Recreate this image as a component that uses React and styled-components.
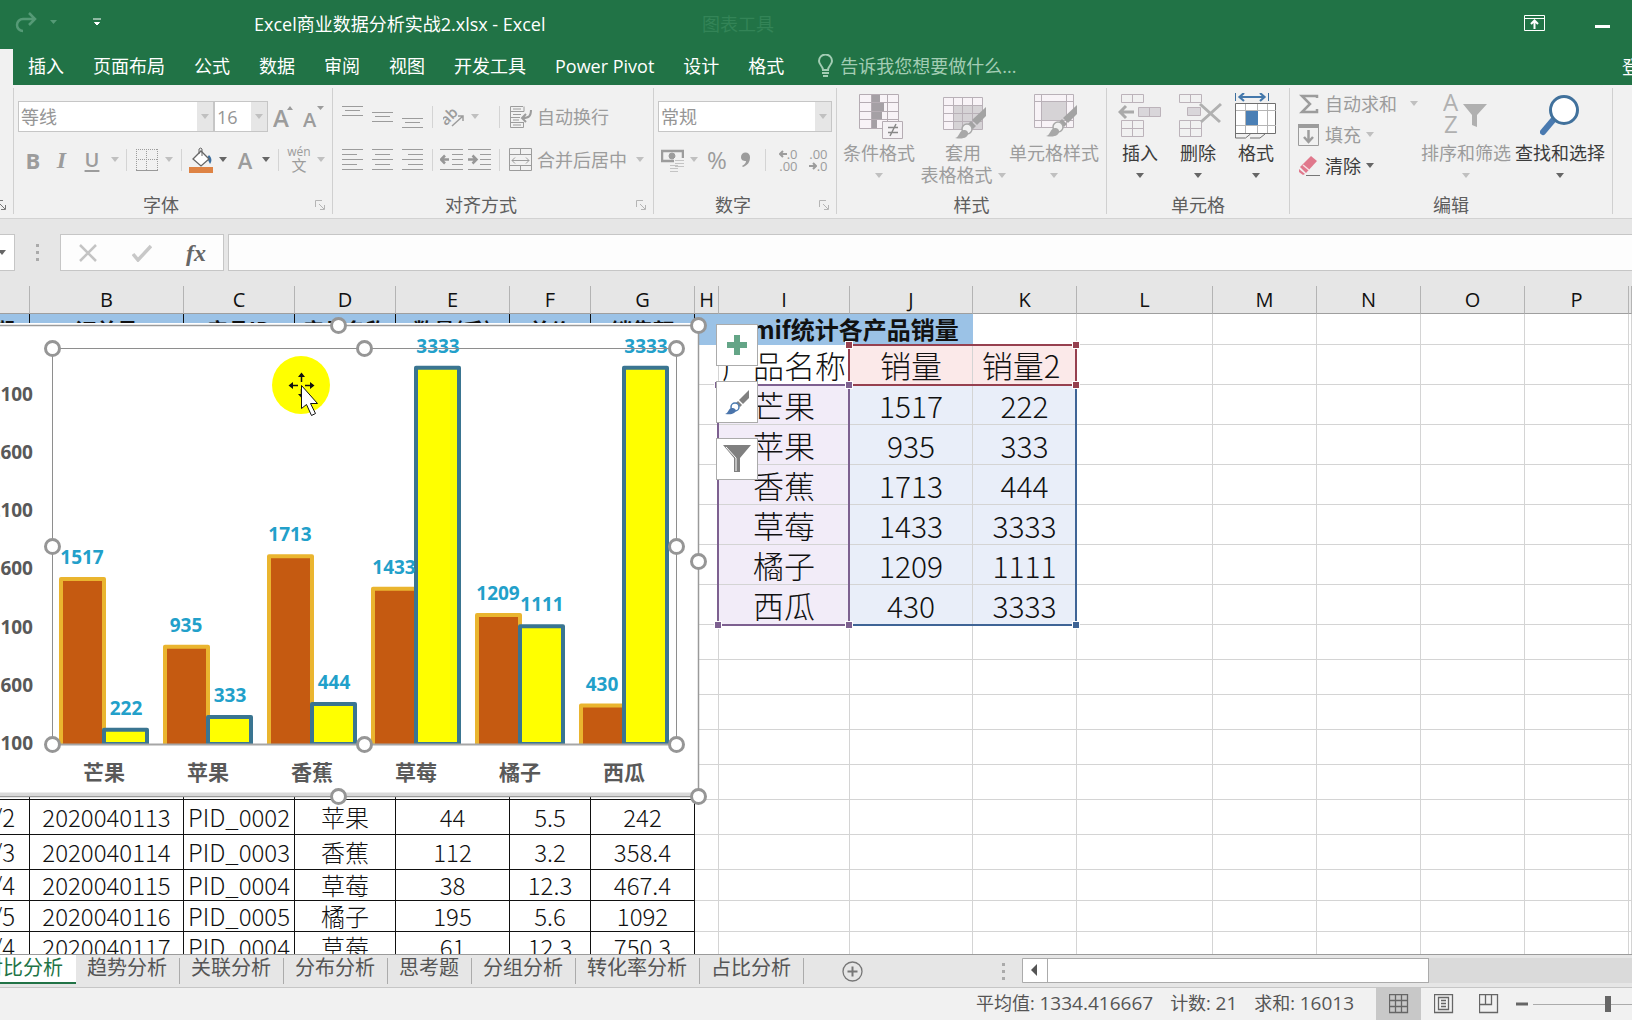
import React from 'react';
import styled, { createGlobalStyle, css } from 'styled-components';

const GlobalStyle = createGlobalStyle`
  * {
    box-sizing: border-box;
  }
  body {
    margin: 0;
    overflow: hidden;
  }
  body, button, input, select {
    font-family: 'Open Sans', 'Noto Sans CJK SC', sans-serif;
    font-size: 18px;
  }
`;

const green = '#217346';
const grey = '#9c9c9c';
const line = '#c6c6c6';

const Window = styled.div`
  display: flex;
  flex-direction: column;
  height: 100vh;
  background: #e6e6e6;
  color: #444;
`;

/* ---------- title bar and tabs ---------- */

const TitleBar = styled.header`
  display: flex;
  align-items: center;
  height: 49px;
  padding: 0 22px 4px 14px;
  background: ${green};
  color: #fff;
`;

const QuickAccess = styled.div`
  display: flex;
  align-items: center;
  gap: 12px;
  width: 240px;
`;

const PlainButton = styled.button`
  display: inline-flex;
  align-items: center;
  justify-content: center;
  flex: none;
  width: ${(p) => (p.$w ? `${p.$w}px` : 'auto')};
  height: ${(p) => (p.$h ? `${p.$h}px` : 'auto')};
  padding: 0;
  border: 0;
  background: none;
  color: ${(p) => p.$color || grey};
  line-height: 24px;
  white-space: nowrap;
`;

const FileName = styled.h1`
  margin: 0;
  width: 421px;
  font-size: 18px;
  font-weight: 400;
  white-space: nowrap;
`;

const ToolsCaption = styled.div`
  width: 128px;
  padding-left: 27px;
  color: #338457;
  white-space: nowrap;
`;

const WindowButtons = styled.div`
  display: flex;
  align-items: center;
  gap: 50px;
  margin-left: auto;
`;

const TabBar = styled.nav`
  display: flex;
  align-items: center;
  gap: 29px;
  height: 36px;
  padding-bottom: 3px;
  background: ${green};
  overflow: hidden;
`;

const CurrentTab = styled.span`
  width: 13px;
  height: 36px;
  margin: 0 -14px -3px 0;
  background: #f1f1f1;
`;

const RibbonTab = styled.a`
  color: #fff;
  line-height: 24px;
  text-decoration: none;
  white-space: nowrap;
`;

const TellMe = styled.label`
  display: flex;
  align-items: center;
  gap: 7px;
  margin-left: 5px;
  input {
    width: 190px;
    height: 26px;
    padding: 0;
    border: 0;
    background: none;
    &::placeholder {
      color: #a3cdb4;
      opacity: 1;
    }
  }
`;

const SignIn = styled.a`
  width: 10px;
  margin-left: auto;
  color: #fff;
  text-decoration: none;
  white-space: nowrap;
  overflow: hidden;
`;

/* ---------- ribbon ---------- */

const Ribbon = styled.div`
  display: flex;
  height: 134px;
  padding: 3px 0 4px;
  background: #f1f1f1;
  border-bottom: 1px solid #d2d2d2;
  overflow: hidden;
`;

const Group = styled.section`
  display: flex;
  flex-direction: column;
  flex: none;
  width: ${(p) => p.$w}px;
  border-right: 1px solid #d0d0d0;
`;

const GroupBody = styled.div`
  display: flex;
  flex: 1;
  padding: 0 ${(p) => p.$pad || 0}px;
`;

const GroupFooter = styled.div`
  display: flex;
  align-items: center;
  justify-content: flex-end;
  height: 18px;
  color: #5e5e5e;
  h2 {
    flex: 1;
    margin: 0;
    font-size: 18px;
    font-weight: 400;
    line-height: 18px;
    text-align: center;
  }
`;

const Rows = styled.div`
  display: flex;
  flex-direction: column;
  gap: 12px;
  padding-top: 13px;
`;

const ToolRow = styled.div`
  display: flex;
  align-items: center;
  height: 31px;
`;

const Divider = styled.span`
  flex: none;
  width: 1px;
  height: 22px;
  margin: 0 5px 0 ${(p) => (p.$far ? 19 : 5)}px;
  background: #d4d4d4;
`;

const Caret = styled.i`
  flex: none;
  display: inline-block;
  border: 4px solid transparent;
  border-top: 5px solid ${(p) => (p.$dark ? '#666' : '#c0c0c0')};
  border-bottom: 0;
`;

const Combo = styled.span`
  display: flex;
  flex: none;
  width: ${(p) => p.$w}px;
  height: 31px;
  border: 1px solid ${line};
  background: #fff;
  select {
    flex: 1;
    min-width: 0;
    padding: 0 2px;
    border: 0;
    background: #fff;
    color: #959595;
    appearance: none;
  }
`;

const ComboArrow = styled.span`
  display: flex;
  align-items: center;
  justify-content: center;
  width: 16px;
  background: #e6e6e6;
`;

const Glyph = styled.span`
  font-size: ${(p) => p.$size || 22}px;
  line-height: 26px;
  font-weight: ${(p) => p.$weight || 400};
  font-style: ${(p) => (p.$italic ? 'italic' : 'normal')};
  font-family: ${(p) => (p.$serif ? "'Liberation Serif', serif" : 'inherit')};
  text-decoration: ${(p) => (p.$under ? 'underline' : 'none')};
  text-decoration-thickness: 2px;
  text-underline-offset: 3px;
`;

const Pinyin = styled.span`
  display: flex;
  flex-direction: column;
  align-items: center;
  font-size: 12px;
  line-height: 12px;
  span {
    font-size: 15px;
    line-height: 15px;
  }
`;

const Decimals = styled.span`
  display: flex;
  flex-direction: column;
  align-items: flex-end;
  width: 23px;
  font-size: 13px;
  line-height: 12px;
  span {
    display: flex;
    align-items: center;
  }
`;

const BigButton = styled.button`
  display: flex;
  flex-direction: column;
  align-items: center;
  flex: none;
  width: ${(p) => p.$w}px;
  height: 100px;
  padding: 5px 0 0;
  border: 0;
  background: none;
  color: ${(p) => (p.$on ? '#3c3c3c' : grey)};
  line-height: 22px;
  white-space: nowrap;
`;

const BigIcon = styled.span`
  display: flex;
  justify-content: center;
  height: 49px;
`;

const BigTail = styled.span`
  display: flex;
  align-items: center;
  gap: 5px;
  height: 22px;
`;

const EditList = styled.div`
  display: flex;
  flex-direction: column;
  width: 129px;
  padding-left: 8px;
`;

const EditButton = styled(PlainButton)`
  justify-content: flex-start;
  gap: 5px;
  height: 31px;
  i {
    margin-left: ${(p) => (p.$far ? 8 : 0)}px;
  }
`;

/* ---------- formula bar ---------- */

const FormulaBar = styled.div`
  display: flex;
  height: 67px;
  padding: 15px 0;
`;

const NameBox = styled.div`
  display: flex;
  align-items: center;
  justify-content: flex-end;
  width: 15px;
  border: 1px solid ${line};
  border-left: 0;
  background: #fff;
  padding-right: 8px;
`;

const Grip = styled.span`
  display: flex;
  flex-direction: column;
  align-items: center;
  justify-content: center;
  gap: 4px;
  width: ${(p) => p.$w}px;
  &::before, &::after, i {
    content: '';
    width: 3px;
    height: 3px;
    background: #aaa;
  }
`;

const FormulaButtons = styled.div`
  display: flex;
  align-items: center;
  width: 164px;
  margin-right: 4px;
  border: 1px solid ${line};
  background: #fdfdfd;
`;

const FormulaInput = styled.input`
  flex: 1;
  min-width: 0;
  border: 1px solid ${line};
  border-right: 0;
  border-radius: 0;
  background: #fdfdfd;
`;

/* ---------- sheet ---------- */

const Sheet = styled.main`
  position: relative;
  flex: 1;
  min-height: 0;
  background: #fff;
  overflow: hidden;
`;

const Grid = styled.table`
  width: 100%;
  table-layout: fixed;
  border-spacing: 0;
  color: #111;
  font-family: 'Noto Sans CJK SC', sans-serif;
`;

const ColHead = styled.th`
  height: 28px;
  padding: 0;
  background: #e6e6e6;
  border-right: 1px solid #b4b4b4;
  border-bottom: 1px solid #9f9f9f;
  font: 400 20px/22px 'Open Sans', sans-serif;
`;

const fills = {
  blue: '#9bc2e6',
  range: '#e9eef9',
  names: '#f2ecf8',
  head: '#fbe9e9',
};

const Cell = styled.td`
  height: ${(p) => p.$h}px;
  padding: 0;
  border-right: 1px solid #d4d4d4;
  border-bottom: 1px solid #d4d4d4;
  font-size: ${(p) => p.$size || 24}px;
  font-weight: 300;
  line-height: 26px;
  text-align: center;
  white-space: nowrap;
  overflow: hidden;
  ${(p) => p.$fill && css`background: ${fills[p.$fill]};`}
  ${(p) => p.$boxed && css`border-color: #111;`}
  ${(p) => p.$bold && css`font-weight: 700;`}
  ${(p) => p.$merged && css`
    padding-left: 16px;
    border-right-color: ${fills.blue};
    border-bottom-color: ${fills.blue};
  `}
  ${(p) => p.$end && css`direction: rtl; padding-right: 15px;`}
`;

const Range = styled.div`
  position: absolute;
  left: ${(p) => p.$x}px;
  top: ${(p) => p.$y}px;
  width: ${(p) => p.$w}px;
  height: ${(p) => p.$h}px;
  border: 2px solid ${(p) => p.$color};
  i {
    position: absolute;
    width: 8px;
    height: 8px;
    border: 1px solid #fff;
    background: ${(p) => p.$color};
  }
  i:nth-child(1) { left: -5px; top: -5px; }
  i:nth-child(2) { right: -5px; top: -5px; }
  i:nth-child(3) { left: -5px; bottom: -5px; }
  i:nth-child(4) { right: -5px; bottom: -5px; }
`;

const ChartLayer = styled.svg`
  position: absolute;
  left: 0;
  top: 28px;
  font-family: 'Open Sans', 'Noto Sans CJK SC', sans-serif;
  font-weight: 700;
`;

const ChartButtons = styled.div`
  position: absolute;
  left: 716px;
  top: 38px;
  display: flex;
  flex-direction: column;
  gap: 15px;
  button {
    display: flex;
    align-items: center;
    justify-content: center;
    width: 42px;
    height: 42px;
    padding: 0;
    border: 1px solid #ababab;
    background: #fff;
  }
`;

const Pointer = styled.svg`
  position: absolute;
  left: 272px;
  top: 69px;
`;

/* ---------- sheet tabs and status bar ---------- */

const SheetBar = styled.div`
  display: flex;
  height: 34px;
  border-top: 1px solid #9b9b9b;
  border-bottom: 1px solid ${line};
  background: #e6e6e6;
`;

const SheetTab = styled.a`
  flex: none;
  height: 26px;
  margin-top: 3px;
  padding: 0 12px 0 11px;
  border-right: 1px solid #ababab;
  color: #555;
  font-size: 20px;
  line-height: 20px;
  text-decoration: none;
  white-space: nowrap;
  ${(p) => p.$current && css`
    display: flex;
    justify-content: flex-end;
    width: 76px;
    height: 29px;
    margin-top: 0;
    padding: 3px 13px 0 0;
    border-right: 0;
    border-bottom: 2px solid ${green};
    background: #fff;
    color: ${green};
    overflow: hidden;
  `}
`;

const BarSpace = styled.span`
  width: 83px;
`;

const ScrollBar = styled.div`
  display: flex;
  flex: 1;
  height: 25px;
  margin-top: 3px;
  background: #dadada;
`;

const ScrollThumb = styled.div`
  width: 382px;
  border: 1px solid #ababab;
  background: #fff;
`;

const StatusBar = styled.footer`
  display: flex;
  align-items: center;
  justify-content: flex-end;
  height: 32px;
  background: #f1f1f1;
  color: #555;
  white-space: nowrap;
`;

const Stats = styled.div`
  display: flex;
  gap: 17px;
  margin-right: 22px;
  padding-bottom: 3px;
  line-height: 24px;
  b {
    font-size: 19px;
    font-weight: 400;
  }
`;

const ViewButton = styled.button`
  display: flex;
  align-items: center;
  justify-content: center;
  width: 45px;
  height: 32px;
  padding: 0;
  border: 0;
  background: ${(p) => (p.$on ? '#c8c8c8' : 'transparent')};
`;

const Zoom = styled.input`
  width: 99px;
  height: 20px;
  margin: 0;
  appearance: none;
  background: linear-gradient(#ababab, #ababab) center / 100% 1px no-repeat;
  &::-webkit-slider-thumb {
    appearance: none;
    width: 6px;
    height: 16px;
    background: #666;
  }
`;

/* ---------- icons ---------- */

const Svg = ({ w, h, children, ...rest }) => (
  <svg width={w} height={h} viewBox={`0 0 ${w} ${h}`} fill="none" stroke={grey} aria-hidden="true" {...rest}>
    {children}
  </svg>
);

const Lines = ({ rows, w = 21, h = 24 }) => (
  <Svg w={w} h={h}>
    {rows.map(([x1, x2, y]) => (
      <path key={y} d={`M${x1} ${y + 0.5}H${x2}`} />
    ))}
  </Svg>
);

const alignTop = [[0, 21, 1], [3, 18, 5], [0, 21, 10]];
const alignMiddle = [[0, 21, 7], [3, 18, 11], [0, 21, 16]];
const alignBottom = [[0, 21, 13], [3, 18, 17], [0, 21, 22]];
const leftLines = [[0, 21, 1], [0, 15, 6], [0, 21, 11], [0, 15, 16], [0, 21, 21]];
const centerLines = [[0, 21, 1], [3, 18, 6], [0, 21, 11], [3, 18, 16], [0, 21, 21]];
const rightLines = [[0, 21, 1], [6, 21, 6], [0, 21, 11], [6, 21, 16], [0, 21, 21]];

const Launcher = ({ dark }) => (
  <PlainButton $w={24} $h={18} aria-label="对话框启动器">
    <Svg w={10} h={10} stroke={dark ? '#777' : '#b5b5b5'}>
      <path d="M.5 7V.5H7M4 4l5 5M9.5 5v4.500H5" />
    </Svg>
  </PlainButton>
);

const GrowFont = ({ down }) => (
  <Svg w={22} h={26} fill={grey} stroke="none">
    <text x="0" y="23" fontSize={down ? 20 : 24} fontWeight="600">A</text>
    <path d={down ? 'M14 2h7l-3.500 4z' : 'M14 6h6l-3-4z'} />
  </Svg>
);

const Indent = ({ flip }) => (
  <Svg w={23} h={23}>
    <path d="M0 1.500h23M12 6.500h11M12 11.500h11M12 16.500h11M0 21.500h23" />
    <path d={flip ? 'M0 11.500h8M4.500 7.500l4 4-4 4' : 'M9 11.500H1M5 7.500l-4 4 4 4'} strokeWidth="2.500" stroke="#979797" />
  </Svg>
);

const Brush = ({ x = 0, y = 0, tip = '#a8a8a8' }) => (
  <g transform={`translate(${x} ${y})`} stroke="none">
    <path d="M31 0v9L22 18l-5-5z" fill="#a3a3a3" />
    <path d="M16 14l5 5-3 3-5-5z" fill="#a3a3a3" />
    <circle cx="12" cy="22" r="5" fill="#f1f1f1" stroke={tip} strokeWidth="1.500" />
    <path d="M0 31c5-1 4-9 10-8 4 1 4 5 1 7-2 1.500-6 2-11 1z" fill={tip} />
  </g>
);

const ConditionalIcon = () => (
  <Svg w={40} h={46} stroke="#b5acb3" overflow="visible">
    <path d="M.5 1.500h39v34H.5z" fill="#f8f3f7" />
    <path d="M12 2h9v8h-9zM12 10h13v9H12zM12 19h11v8H12zM12 27h6v8h-6z" fill="#a5a0a5" stroke="none" />
    <path d="M.5 9.500h39M.5 18.500h39M.5 26.500h39M12.500 1v34M28.500 1v34" />
    <path d="M23.500 28.500h20v17h-20z" fill="#f5f2f5" />
    <path d="M29 34.500h10M29 39.500h10M37 31l-6 12" stroke="#888" strokeWidth="1.500" />
  </Svg>
);

const TableStyleIcon = () => (
  <Svg w={40} h={48} stroke="#b9b1b8" overflow="visible">
    <path d="M.5 4.500h39v32H.5z" fill="#f8f3f7" />
    <path d="M10 13h29v23H10z" fill="#d6d3d6" stroke="none" />
    <path d="M.5 12.500h39M.5 20.500h39M.5 28.500h39M10.500 4v32M19.500 4v32M29.500 4v32" />
    <Brush x={12} y={14} />
  </Svg>
);

const CellStyleIcon = () => (
  <Svg w={40} h={46} stroke="#b9b1b8" overflow="visible">
    <path d="M.5 1.500h39v33H.5z" fill="#f8f3f7" />
    <path d="M8 9h24v19H8z" fill="#d6d3d6" stroke="none" />
    <path d="M.5 8.500h39M7.500 1v33M.5 27.500h39M32.500 1v33" />
    <Brush x={12} y={12} />
  </Svg>
);

const InsertIcon = () => (
  <Svg w={44} h={45} stroke="#bcb3ba">
    <path d="M3.500 1.500h22v8h-22zM14.500 1v8" />
    <path d="M20.500 14.500h22v9h-22z" fill="#d9d6da" />
    <path d="M31.500 14v9M3.500 27.500h22v16h-22zM14.500 27v16M3 35.500h22" />
    <path d="M16 19H2M8 13l-6 6 6 6" stroke="#aaa" strokeWidth="3" />
  </Svg>
);

const DeleteIcon = () => (
  <Svg w={38} h={45} stroke="#bcb3ba" overflow="visible">
    <path d="M.5 1.500h22v8H.5zM11.500 1v8" />
    <path d="M8.500 14.500h13v8h-13z" fill="#d9d6da" />
    <path d="M.5 27.500h22v16H.5zM11.500 27v16M0 35.500h22" />
    <path d="M21 11l20 18M42 11L22 29" stroke="#b0b0b0" strokeWidth="3" />
  </Svg>
);

const FormatIcon = () => (
  <Svg w={42} h={46} stroke="#6f6f6f">
    <path d="M.5 0v8M33.500 0v8" stroke="#3d6f9f" />
    <path d="M4 4h26M9 0L4.500 4 9 8M25 0l4.500 4L25 8" stroke="#4478ab" strokeWidth="2.200" />
    <path d="M.5 10.500h40v30H.5z" fill="#fff" />
    <path d="M10.500 11v29M22.500 11v29M32.500 11v29M1 17.500h40M1 32.500h40" stroke="#b5b5b5" />
    <path d="M11 18h12v14H11z" fill="#4a7fb5" stroke="none" />
    <path d="M.5 40v5h10l5-4M15 45h10l5-4" />
  </Svg>
);

const SortIcon = () => (
  <Svg w={46} h={44} stroke="none" fill="#b0b0b0">
    <text x="0" y="18" fontSize="24">A</text>
    <text x="1" y="40" fontSize="24">Z</text>
    <path d="M20 11h24L34 22v12l-5-2V22z" />
  </Svg>
);

const FindIcon = () => (
  <Svg w={40} h={44} stroke="#41719c">
    <path d="M14 26L3 39" stroke="#4a7ab0" strokeWidth="6" strokeLinecap="round" />
    <circle cx="24" cy="17" r="13.500" fill="#fff" strokeWidth="3" />
  </Svg>
);

/* ---------- chart ---------- */

const products = [
  ['芒果', 1517, 222],
  ['苹果', 935, 333],
  ['香蕉', 1713, 444],
  ['草莓', 1433, 3333],
  ['橘子', 1209, 1111],
  ['西瓜', 430, 3333],
];

const plot = { left: 52, right: 676, top: 34, bottom: 430 };
const step = (plot.right - plot.left) / products.length;
const barWidth = 43;
const yOf = (v) => plot.bottom - (v - 100) * 0.1164;

const Bar = ({ x, value, fill, stroke }) => {
  const top = yOf(value);
  return (
    <path
      d={`M${x} ${plot.bottom}V${top}H${x + barWidth}V${plot.bottom}`}
      fill={fill}
      stroke={stroke}
      strokeWidth="4"
      strokeLinejoin="round"
    />
  );
};

const handles = [
  [338, 11], [698, 11], [698, 247], [698, 482], [338, 482],
  [52, 34], [364, 34], [676, 34], [52, 232], [676, 232], [52, 430], [364, 430], [676, 430],
];

const Chart = () => (
  <ChartLayer width="708" height="494" role="img" aria-label="各产品销量">
    <rect x="-22" y="9" width="720" height="474" fill="#fff" />
    <path d="M0 480H697" stroke="#d9d9d9" strokeWidth="3" />
    <path d="M0 11.500H698.500V482.500H0" fill="none" stroke="#9a9a9a" strokeWidth="1.500" />
    {[3100, 2600, 2100, 1600, 1100, 600, 100].map((v) => (
      <text key={v} x="33" y={yOf(v) + 6} fontSize="19" fill="#595959" textAnchor="end">{v}</text>
    ))}
    {products.map(([name, a, b], i) => {
      const mid = plot.left + step * (i + 0.5);
      return (
        <g key={name}>
          <Bar x={mid - barWidth} value={a} fill="#c55a11" stroke="#eab52f" />
          <Bar x={mid} value={b} fill="#ffff00" stroke="#3a7591" />
          <path d={`M${mid} ${plot.bottom - 1}h${barWidth}`} stroke="#3a7591" strokeWidth="2" />
          <text x={mid} y="466" fontSize="21" fill="#595959" textAnchor="middle">{name}</text>
        </g>
      );
    })}
    <g fontSize="19" fill="#22a0ca" textAnchor="middle">
      {products.map(([name, a, b], i) => {
        const mid = plot.left + step * (i + 0.5);
        return (
          <React.Fragment key={name}>
            <text x={mid - 22} y={yOf(a) - 15}>{a}</text>
            <text x={mid + 22} y={yOf(b) - 15}>{b}</text>
          </React.Fragment>
        );
      })}
    </g>
    <path d="M52.500 34.500H676.500V430.500H52.500z" fill="none" stroke="#8e8e8e" />
    <path d="M52 430.500H676" stroke="#a6a6a6" strokeWidth="2" />
    {handles.map(([x, y]) => (
      <circle key={`${x}-${y}`} cx={x + 0.5} cy={y + 0.5} r="7" fill="#fff" stroke="#969696" strokeWidth="3" />
    ))}
  </ChartLayer>
);

/* ---------- sheet data ---------- */

// the last column takes what is left of the window
const columns = [
  ['A', 30], ['B', 154], ['C', 111], ['D', 101], ['E', 114], ['F', 81], ['G', 104], ['H', 24], ['I', 131],
  ['J', 123], ['K', 104], ['L', 136], ['M', 104], ['N', 104], ['O', 104], ['P', 104], ['Q', null],
];

const titles = ['日期', '订单号', '产品ID', '产品名称', '数量(千)', '单价', '销售额'];

const orders = [
  [35, '2020/4/2', '2020040113', 'PID_0002', '苹果', '44', '5.5', '242'],
  [35, '2020/4/3', '2020040114', 'PID_0003', '香蕉', '112', '3.2', '358.4'],
  [31, '2020/4/4', '2020040115', 'PID_0004', '草莓', '38', '12.3', '467.4'],
  [31, '2020/4/5', '2020040116', 'PID_0005', '橘子', '195', '5.6', '1092'],
  [31, '2020/4/4', '2020040117', 'PID_0004', '草莓', '61', '12.3', '750.3'],
];

const Blank = ({ n, h, boxed }) =>
  Array.from({ length: n }, (_, i) => <Cell key={i} $h={h} $boxed={boxed} />);

const SheetGrid = () => (
  <Grid>
    <colgroup>
      {columns.map(([name, w]) => <col key={name} width={w || undefined} />)}
    </colgroup>
    <thead>
      <tr>
        {columns.map(([name, w]) => (
          <ColHead key={name} scope="col">{name === 'A' || !w ? '' : name}</ColHead>
        ))}
      </tr>
    </thead>
    <tbody>
      <tr>
        {titles.map((t, i) => (
          <Cell key={t} $h={31} $size={21} $fill="blue" $bold $boxed $end={i === 0}>{t}</Cell>
        ))}
        <Cell colSpan={3} $h={31} $fill="blue" $bold $merged>sumif统计各产品销量</Cell>
        <Blank n={7} h={31} />
      </tr>
      <tr>
        <Blank n={8} h={40} />
        <Cell $h={40} $size={31}>产品名称</Cell>
        <Cell $h={40} $size={31} $fill="head">销量</Cell>
        <Cell $h={40} $size={31} $fill="head">销量2&nbsp;</Cell>
        <Blank n={6} h={40} />
      </tr>
      {products.map(([name, a, b]) => (
        <tr key={name}>
          <Blank n={8} h={40} />
          <Cell $h={40} $size={31} $fill="names">{name}</Cell>
          <Cell $h={40} $size={30} $fill="range">{a}</Cell>
          <Cell $h={40} $size={30} $fill="range">{b}</Cell>
          <Blank n={6} h={40} />
        </tr>
      ))}
      {[9, 10, 11, 12, 13].map((n) => (
        <tr key={n}>
          <Blank n={7} h={35} boxed />
          <Blank n={10} h={35} />
        </tr>
      ))}
      {orders.map(([h, ...cells]) => (
        <tr key={cells[1]}>
          {cells.map((c, i) => <Cell key={i} $h={h} $boxed $end={i === 0}>{c}</Cell>)}
          <Blank n={10} h={h} />
        </tr>
      ))}
    </tbody>
  </Grid>
);

const RangeMark = (props) => (
  <Range {...props}><i /><i /><i /><i /></Range>
);

/* ---------- ribbon groups ---------- */

const Tool = ({ w, label, children, ...rest }) => (
  <PlainButton $w={w} $h={30} aria-label={label} {...rest}>{children}</PlainButton>
);

const Drop = ({ w, dark }) => (
  <PlainButton $w={w} $h={30} aria-label="更多选项"><Caret $dark={dark} /></PlainButton>
);

const Footer = ({ title, launcher }) => (
  <GroupFooter>
    <h2>{title}</h2>
    {launcher && <Launcher />}
  </GroupFooter>
);

const ComboBox = ({ w, label, value }) => (
  <Combo $w={w}>
    <select aria-label={label} defaultValue={value}>
      <option>{value}</option>
    </select>
    <ComboArrow><Caret /></ComboArrow>
  </Combo>
);

const FontGroup = () => (
  <Group $w={319}>
    <GroupBody $pad={4}>
      <Rows>
        <ToolRow>
          <ComboBox w={196} label="字体" value="等线" />
          <ComboBox w={54} label="字号" value="16" />
          <Tool w={32} label="增大字号"><GrowFont /></Tool>
          <Tool w={28} label="减小字号"><GrowFont down /></Tool>
        </ToolRow>
        <ToolRow>
          <Tool w={30} label="加粗"><Glyph $weight={700}>B</Glyph></Tool>
          <Tool w={27} label="倾斜"><Glyph $serif $italic $weight={700} $size={24}>I</Glyph></Tool>
          <Tool w={34} label="下划线"><Glyph $under $weight={600} $size={20}>U</Glyph></Tool>
          <Drop w={12} />
          <Divider />
          <Tool w={30} label="边框">
            <Svg w={22} h={22}>
              <path d="M.5 0v21M10.500 0v21M21.500 0v21M0 .5h21M0 10.500h21" strokeDasharray="1 1" />
              <path d="M0 21.500h22" stroke="#999" />
            </Svg>
          </Tool>
          <Drop w={14} />
          <Divider />
          <Tool w={28} label="填充颜色">
            <Svg w={24} h={26} stroke="#666">
              <path d="M20 8c3 3 3 6 1 9l-3-6z" fill="#3d6f9f" stroke="none" />
              <path d="M12 4l8 8-8 7-8-7z" fill="#fff" strokeWidth="1.300" />
              <path d="M10 7V2q2-2 3 0v7" />
              <path d="M0 20h24v6H0z" fill="#de8344" stroke="none" />
            </Svg>
          </Tool>
          <Drop w={16} dark />
          <Tool w={28} label="字体颜色"><Glyph $weight={600}>A</Glyph></Tool>
          <Drop w={14} dark />
          <Divider />
          <Tool w={30} label="拼音"><Pinyin>wén<span>文</span></Pinyin></Tool>
          <Drop w={14} />
        </ToolRow>
      </Rows>
    </GroupBody>
    <Footer title="字体" launcher />
  </Group>
);

const AlignGroup = () => (
  <Group $w={321}>
    <GroupBody $pad={4}>
      <Rows>
        <ToolRow>
          <Tool w={30} label="顶端对齐"><Lines rows={alignTop} /></Tool>
          <Tool w={30} label="垂直居中"><Lines rows={alignMiddle} /></Tool>
          <Tool w={30} label="底端对齐"><Lines rows={alignBottom} /></Tool>
          <Divider />
          <Tool w={32} label="方向">
            <Svg w={22} h={24}>
              <text x="-2" y="15" fontSize="15" fontWeight="600" fill={grey} stroke="none" transform="rotate(-45 8 12)">ab</text>
              <path d="M9 21L20 11M15 11h5v5" strokeWidth="1.500" />
            </Svg>
          </Tool>
          <Drop w={10} />
          <Divider $far />
          <Tool w={32} label="换行图标">
            <Svg w={24} h={24}>
              <path d="M14 1.500H1.500v21h13v-5M1 6.500h14M1 12.500h10M1 17.500h14M15 1.500v5M4 4h8M4 9.500h8M4 15h6M4 20h8" />
              <path d="M22 5c0 6-2 8-8 8M17 9l-4 4 4 4" strokeWidth="2" />
            </Svg>
          </Tool>
          <PlainButton>自动换行</PlainButton>
        </ToolRow>
        <ToolRow>
          <Tool w={30} label="左对齐"><Lines rows={leftLines} /></Tool>
          <Tool w={30} label="居中"><Lines rows={centerLines} /></Tool>
          <Tool w={30} label="右对齐"><Lines rows={rightLines} /></Tool>
          <Divider />
          <Tool w={26} label="减少缩进量"><Indent /></Tool>
          <Tool w={30} label="增加缩进量"><Indent flip /></Tool>
          <Divider />
          <Tool w={32} label="合并图标">
            <Svg w={24} h={24}>
              <path d="M.5 .5h22v22H.5zM.5 6.500h22M.5 17.500h22M11.500 1v5M11.500 18v5M3 12.500h17M6 9.500l-3 3 3 3M17 9.500l3 3-3 3" />
            </Svg>
          </Tool>
          <PlainButton>合并后居中</PlainButton>
          <Drop w={26} />
        </ToolRow>
      </Rows>
    </GroupBody>
    <Footer title="对齐方式" launcher />
  </Group>
);

const NumberGroup = () => (
  <Group $w={183}>
    <GroupBody $pad={4}>
      <Rows>
        <ToolRow><ComboBox w={174} label="数字格式" value="常规" /></ToolRow>
        <ToolRow>
          <Tool w={28} label="会计数字格式">
            <Svg w={23} h={24}>
              <path d="M1 3h21v10H1z" strokeWidth="2.500" />
              <circle cx="11" cy="8" r="3" fill={grey} />
              <path d="M13 10h10v10H13z" fill="#f1f1f1" stroke="none" />
              <path d="M14 12.500h9M14 15.500h9M14 18.500h9M9 17.500h8M9 20.500h8M9 23.500h8" stroke="#c4c4c4" />
            </Svg>
          </Tool>
          <Drop w={16} />
          <Tool w={30} label="百分比样式"><Glyph $size={24}>%</Glyph></Tool>
          <Tool w={28} label="千位分隔样式">
            <Svg w={10} h={16} fill={grey} stroke="none">
              <path d="M0 5a4.500 4.500 0 0 1 9 0c0 5-2 8-7 10l-1-1c3-2 4-3 4-5-3 0-5-1-5-4z" />
            </Svg>
          </Tool>
          <Divider />
          <Tool w={30} label="增加小数位数">
            <Decimals>
              <span><Svg w={8} h={8}><path d="M8 4H1M4 1L1 4l3 3" strokeWidth="2" /></Svg>.0</span>
              <span>.00</span>
            </Decimals>
          </Tool>
          <Tool w={30} label="减少小数位数">
            <Decimals>
              <span>.00</span>
              <span><Svg w={8} h={8}><path d="M0 4h7M4 1l3 3-3 3" strokeWidth="2" /></Svg>.0</span>
            </Decimals>
          </Tool>
        </ToolRow>
      </Rows>
    </GroupBody>
    <Footer title="数字" launcher />
  </Group>
);

const Big = ({ w, icon, label, tail, on }) => (
  <BigButton $w={w} $on={on}>
    <BigIcon>{icon}</BigIcon>
    <span>{label}</span>
    <BigTail>{tail}<Caret $dark={on} /></BigTail>
  </BigButton>
);

const EditGroup = () => (
  <Group $w={323}>
    <GroupBody>
      <EditList>
        <EditButton $far>
          <Svg w={22} h={22}><path d="M19 5V3H4l8 8-8 8h15v-3" strokeWidth="2.500" /></Svg>
          自动求和<Caret />
        </EditButton>
        <EditButton>
          <Svg w={22} h={22}>
            <path d="M.5 .5h20v21H.5z" /><path d="M0 2h21" strokeWidth="4" />
            <path d="M10.500 6v12M6 13l4.500 5 4.500-5" strokeWidth="2.500" />
          </Svg>
          填充<Caret />
        </EditButton>
        <EditButton $color="#3c3c3c">
          <Svg w={22} h={22}>
            <path d="M2 12L13 1l6 5L8 18z" fill="#e0788c" stroke="none" />
            <path d="M1 14l6 5-2 1-4-3z" fill="#e0788c" stroke="none" />
            <path d="M5 10l6 5" stroke="#f6dfe3" strokeWidth="1.500" />
            <path d="M8 20.500h14" stroke="#777" />
          </Svg>
          清除<Caret $dark />
        </EditButton>
      </EditList>
      <Big w={94} icon={<SortIcon />} label="排序和筛选" />
      <Big w={94} icon={<FindIcon />} label="查找和选择" on />
    </GroupBody>
    <Footer title="编辑" />
  </Group>
);

const sheetNames = ['趋势分析', '关联分析', '分布分析', '思考题', '分组分析', '转化率分析', '占比分析'];

const App = () => (
  <Window>
    <GlobalStyle />
    <TitleBar>
      <QuickAccess>
        <PlainButton $w={24} aria-label="恢复">
          <Svg w={22} h={22} stroke="#559a76" strokeWidth="2.500">
            <path d="M14 1l6 6-6 6M20 7H8a6 6 0 0 0 0 12" />
          </Svg>
        </PlainButton>
        <Svg w={8} h={5} fill="#559a76" stroke="none"><path d="M0 0h7L3.500 4z" /></Svg>
        <Svg w={50} h={9} stroke="#fff" fill="#fff"><path d="M23 1h8M24.500 4.500h5L27 7z" /></Svg>
      </QuickAccess>
      <FileName>Excel商业数据分析实战2.xlsx - Excel</FileName>
      <ToolsCaption>图表工具</ToolsCaption>
      <WindowButtons>
        <PlainButton aria-label="功能区显示选项">
          <Svg w={21} h={16} stroke="#fff">
            <path d="M.5 .5h20v15H.5zM0 3.500h20" />
            <path d="M10.500 14V6M7 9l3.500-3.500L14 9" strokeWidth="2" />
          </Svg>
        </PlainButton>
        <PlainButton aria-label="最小化">
          <Svg w={15} h={12} stroke="#fff"><path d="M0 9.500h15" strokeWidth="3" /></Svg>
        </PlainButton>
      </WindowButtons>
    </TitleBar>
    <TabBar>
      <CurrentTab />
      {['插入', '页面布局', '公式', '数据', '审阅', '视图', '开发工具', 'Power Pivot', '设计', '格式'].map((t) => (
        <RibbonTab key={t} href="#">{t}</RibbonTab>
      ))}
      <TellMe>
        <Svg w={15} h={23} stroke="#a3cdb4" strokeWidth="2">
          <path d="M5 16c0-4-4-5-4-9a6.500 6.500 0 0 1 13 0c0 4-4 5-4 9zM4 19h7M5 22h5" />
        </Svg>
        <input aria-label="操作说明搜索" placeholder="告诉我您想要做什么..." />
      </TellMe>
      <SignIn href="#">登录</SignIn>
    </TabBar>
    <Ribbon>
      <Group $w={14}>
        <GroupBody />
        <GroupFooter><Launcher dark /></GroupFooter>
      </Group>
      <FontGroup />
      <AlignGroup />
      <NumberGroup />
      <Group $w={270}>
        <GroupBody>
          <Big w={84} icon={<ConditionalIcon />} label="条件格式" />
          <Big w={84} icon={<TableStyleIcon />} label="套用" tail="表格格式" />
          <Big w={98} icon={<CellStyleIcon />} label="单元格样式" />
        </GroupBody>
        <Footer title="样式" />
      </Group>
      <Group $w={183}>
        <GroupBody $pad={4}>
          <Big w={58} icon={<InsertIcon />} label="插入" on />
          <Big w={58} icon={<DeleteIcon />} label="删除" on />
          <Big w={58} icon={<FormatIcon />} label="格式" on />
        </GroupBody>
        <Footer title="单元格" />
      </Group>
      <EditGroup />
    </Ribbon>
    <FormulaBar>
      <NameBox><Caret $dark /></NameBox>
      <Grip $w={45}><i /></Grip>
      <FormulaButtons>
        <PlainButton $w={54} aria-label="取消">
          <Svg w={18} h={18} stroke="#c4c4c4" strokeWidth="2.500"><path d="M1 1l16 16M17 1L1 17" /></Svg>
        </PlainButton>
        <PlainButton $w={54} aria-label="输入">
          <Svg w={20} h={18} stroke="#c8c8c8" strokeWidth="3.500"><path d="M1 10l5 6L19 2" /></Svg>
        </PlainButton>
        <PlainButton $w={54} $color="#666" aria-label="插入函数">
          <Glyph $serif $italic $weight={700} $size={24}>fx</Glyph>
        </PlainButton>
      </FormulaButtons>
      <FormulaInput aria-label="编辑栏" />
    </FormulaBar>
    <Sheet>
      <SheetGrid />
      <RangeMark $x={848} $y={98} $w={229} $h={242} $color="#3f6496" />
      <RangeMark $x={848} $y={58} $w={229} $h={42} $color="#96404f" />
      <RangeMark $x={717} $y={98} $w={133} $h={242} $color="#7d6090" />
      <Chart />
      <ChartButtons>
        <button aria-label="图表元素">
          <Svg w={20} h={20} stroke="none" fill="#64a587"><path d="M7 0h6v7h7v6h-7v7H7v-7H0V7h7z" /></Svg>
        </button>
        <button aria-label="图表样式">
          <Svg w={26} h={26} stroke="none">
            <path d="M25 1v8l-6 6-4-4z" fill="#808080" />
            <path d="M14 12l4 4-2 2-4-4z" fill="#808080" />
            <circle cx="11" cy="18" r="4" fill="#fff" stroke="#4a7ab0" strokeWidth="1.500" />
            <path d="M1 25c4-1 3-7 8-6 4 1 3 4 1 5-2 1.500-5 1.500-9 1z" fill="#4a74ab" />
          </Svg>
        </button>
        <button aria-label="图表筛选器">
          <Svg w={28} h={28} stroke="none" fill="#808080">
            <path d="M0 0h28L17 13v14h-6V13z" />
            <path d="M3 2l10 11v13" fill="none" stroke="#fff" />
          </Svg>
        </button>
      </ChartButtons>
      <Pointer width="60" height="62" aria-hidden="true">
        <circle cx="29" cy="30" r="29" fill="#ffff00" />
        <path d="M29.500 19v8M29.500 34v7M18 30.500h8M33 30.500h8" stroke="#111" strokeWidth="1.500" />
        <path d="M26 22h7l-3.500-4.500zM21 27v7l-4.500-3.500zM38 27v7l4.500-3.500zM26 39h7l-3.500 4z" fill="#111" />
        <path d="M29.500 30.500v23l5-4 5 11 4-2-5-10h7z" fill="#fff" stroke="#111" />
      </Pointer>
    </Sheet>
    <SheetBar>
      <SheetTab href="#" $current>对比分析</SheetTab>
      {sheetNames.map((n) => <SheetTab key={n} href="#">{n}</SheetTab>)}
      <PlainButton $w={97} $h={32} aria-label="新工作表">
        <Svg w={21} h={21} stroke="#777">
          <circle cx="10.500" cy="10.500" r="9.500" strokeWidth="1.300" />
          <path d="M10.500 5.500v10M5.500 10.500h10" strokeWidth="2" />
        </Svg>
      </PlainButton>
      <BarSpace />
      <Grip $w={38}><i /></Grip>
      <ScrollBar>
        <PlainButton $w={25} $h={25} aria-label="向左滚动">
          <Svg w={25} h={25} stroke="#ababab">
            <path d="M.5 .5h25v24H.5z" fill="#fff" />
            <path d="M15 6v12l-6-6z" fill="#555" stroke="none" />
          </Svg>
        </PlainButton>
        <ScrollThumb />
      </ScrollBar>
    </SheetBar>
    <StatusBar>
      <Stats>
        <span>平均值: <b>1334.416667</b></span>
        <span>计数: <b>21</b></span>
        <span>求和: <b>16013</b></span>
      </Stats>
      <ViewButton $on aria-label="普通">
        <Svg w={20} h={20} stroke="#666"><path d="M.5 .5h18v18H.5zM.5 6.500h18M.5 12.500h18M6.500 .5v18M12.500 .5v18" strokeWidth="1.300" /></Svg>
      </ViewButton>
      <ViewButton aria-label="页面布局">
        <Svg w={20} h={20} stroke="#666"><path d="M.5 .5h18v18H.5zM4.500 3.500h10v12h-10zM7 6.500h5M7 9.500h5M7 12.500h5" strokeWidth="1.300" /></Svg>
      </ViewButton>
      <ViewButton aria-label="分页预览">
        <Svg w={20} h={20} stroke="#666"><path d="M.5 .5h18v18H.5zM.5 10.500h12V.5M6.500 .5v10" strokeWidth="1.300" /></Svg>
      </ViewButton>
      <PlainButton $w={22} aria-label="缩小">
        <Svg w={12} h={4} stroke="#666"><path d="M0 2h12" strokeWidth="3" /></Svg>
      </PlainButton>
      <Zoom type="range" min="0" max="100" defaultValue="77" aria-label="显示比例" />
    </StatusBar>
  </Window>
);

export default App;
